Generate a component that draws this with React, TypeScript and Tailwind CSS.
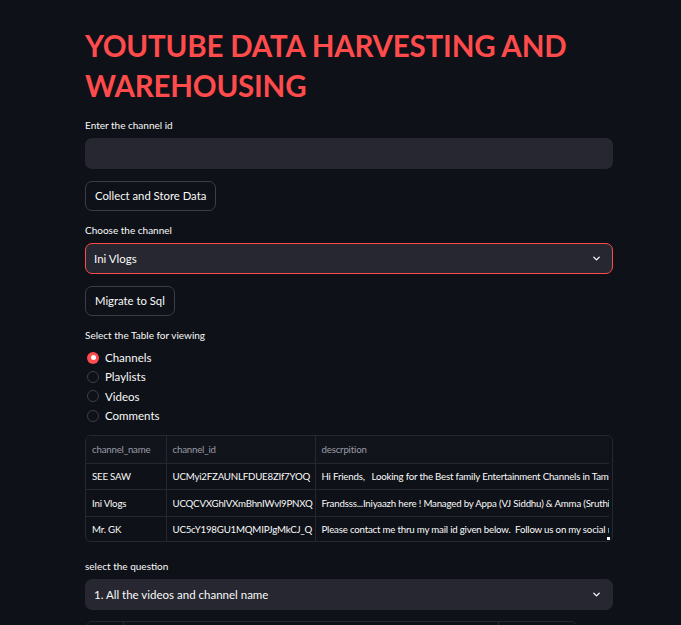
import React, {useState} from 'react';

const font = {fontFamily: '"Lato", "Noto Sans", sans-serif'};

const Chevron = () => (
    <svg width="11" height="11" viewBox="0 0 24 24" fill="none" stroke="#fafafa" strokeWidth="3" strokeLinecap="round" strokeLinejoin="round">
        <path d="M6 9l6 6 6-6"/>
    </svg>
);

const Label: React.FC<{text: string}> = ({text}) => (
    <div className="text-[10px] leading-[14px] text-[#fafafa] mb-[6px]">{text}</div>
);

const Select: React.FC<{value: string; focused?: boolean}> = ({value, focused}) => (
    <div
        className={`flex h-[31px] items-center justify-between rounded-[7px] bg-[#262730] pl-[8px] pr-[10px] text-[11.5px] text-[#fafafa] border ${focused ? 'border-[#ff4b4b]' : 'border-[#262730]'}`}
    >
        <span>{value}</span>
        <Chevron/>
    </div>
);

const Button: React.FC<{text: string}> = ({text}) => (
    <button className="h-[30px] rounded-[7px] border border-[#3b3d47] bg-[#0e1117] px-[9px] text-[11.3px] text-[#fafafa]">
        {text}
    </button>
);

const rows = [
    ['SEE SAW', 'UCMyi2FZAUNLFDUE8ZIf7YOQ', 'Hi Friends,   Looking for the Best family Entertainment Channels in Tamil? You are at the right place'],
    ['Ini Vlogs', 'UCQCVXGhlVXmBhnIWvl9PNXQ', 'Frandsss...Iniyaazh here ! Managed by Appa (VJ Siddhu) & Amma (Sruthi) this channel'],
    ['Mr. GK', 'UC5cY198GU1MQMIPJgMkCJ_Q', 'Please contact me thru my mail id given below.  Follow us on my social media handles'],
];

const App: React.FC = () => {
    const [table, setTable] = useState<string>('Channels');
    const options = ['Channels', 'Playlists', 'Videos', 'Comments'];

    return (
        <div className="h-[625px] w-full bg-[#0e1117] overflow-hidden" style={font}>
            <div className="ml-[85px] w-[528px] pt-[26px]">
                <h1 className="text-[29.5px] font-bold leading-[40px] text-[#ff4b4b] tracking-[-0.2px]">
                    YOUTUBE DATA HARVESTING AND WAREHOUSING
                </h1>

                <div className="mt-[12px]">
                    <Label text="Enter the channel id"/>
                    <div className="h-[31px] rounded-[7px] bg-[#262730]"/>
                </div>

                <div className="mt-[12px]">
                    <Button text="Collect and Store Data"/>
                </div>

                <div className="mt-[12px]">
                    <Label text="Choose the channel"/>
                    <Select value="Ini Vlogs" focused/>
                </div>

                <div className="mt-[12px]">
                    <Button text="Migrate to Sql"/>
                </div>

                <div className="mt-[12px]">
                    <Label text="Select the Table for viewing"/>
                    <div className="flex flex-col">
                        {options.map((o) => (
                            <label key={o} className="flex h-[19.3px] cursor-pointer items-center gap-[6px] pl-[2px] text-[11.5px] text-[#fafafa]" onClick={() => setTable(o)}>
                                {table === o ? (
                                    <span className="flex h-[12px] w-[12px] items-center justify-center rounded-full bg-[#ff4b4b]">
                                        <span className="h-[5px] w-[5px] rounded-full bg-white"/>
                                    </span>
                                ) : (
                                    <span className="h-[12px] w-[12px] rounded-full border border-[#3d3f4a]"/>
                                )}
                                <span>{o}</span>
                            </label>
                        ))}
                    </div>
                </div>

                <div className="relative mt-[10px] h-[107px] overflow-hidden rounded-[6px] border border-[#262730]">
                    <div className="w-[523px] overflow-hidden">
                        <table className="w-[829px] table-fixed border-collapse text-[9.7px] tracking-[-0.2px]">
                            <colgroup>
                                <col className="w-[80px]"/>
                                <col className="w-[149px]"/>
                                <col className="w-[600px]"/>
                            </colgroup>
                            <thead>
                                <tr className="h-[27px] bg-[#11141b] text-[#9a9ca6]">
                                    <th className="border-r border-b border-[#262730] px-[6px] text-left font-normal">channel_name</th>
                                    <th className="border-r border-b border-[#262730] px-[6px] text-left font-normal">channel_id</th>
                                    <th className="border-b border-[#262730] px-[6px] text-left font-normal">descrpition</th>
                                </tr>
                            </thead>
                            <tbody>
                                {rows.map((r, i) => (
                                    <tr key={r[1]} className="h-[26.5px] text-[#fafafa]">
                                        <td className={`border-r border-[#262730] px-[6px] whitespace-nowrap overflow-hidden ${i < 2 ? 'border-b' : ''}`}>{r[0]}</td>
                                        <td className={`border-r border-[#262730] pl-[6px] pr-[2px] whitespace-nowrap overflow-hidden ${i < 2 ? 'border-b' : ''}`}>{r[1]}</td>
                                        <td className={`border-[#262730] px-[6px] whitespace-pre overflow-hidden ${i < 2 ? 'border-b' : ''}`}>{r[2]}</td>
                                    </tr>
                                ))}
                            </tbody>
                        </table>
                    </div>
                    <span className="absolute bottom-[1px] right-[2px] h-[3px] w-[3px] bg-white"/>
                </div>

                <div className="mt-[17px]">
                    <Label text="select the question"/>
                    <Select value="1. All the videos and channel name"/>
                </div>

                <div className="mt-[11px] ml-[1px] flex h-[40px] w-[491px] rounded-t-[6px] border border-[#262730]">
                    <div className="w-[37px] border-r border-[#262730]"/>
                    <div className="w-[375px] border-r border-[#262730]"/>
                    <div className="flex-1"/>
                </div>
            </div>
        </div>
    );
};

export default App;
